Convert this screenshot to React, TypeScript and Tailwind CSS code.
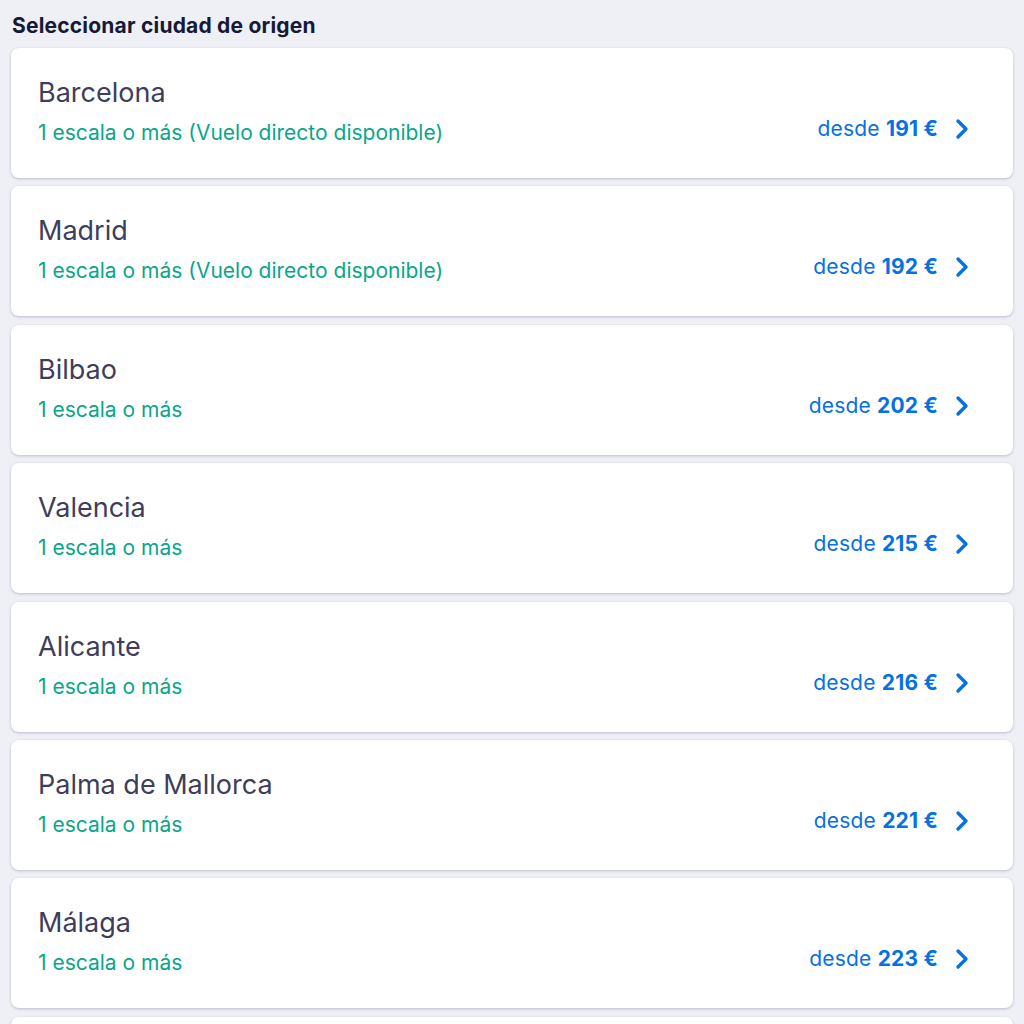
interface Origin {
  city: string;
  stops: string;
  price: number;
}

const origins: Origin[] = [
  { city: 'Barcelona', stops: '1 escala o más (Vuelo directo disponible)', price: 191 },
  { city: 'Madrid', stops: '1 escala o más (Vuelo directo disponible)', price: 192 },
  { city: 'Bilbao', stops: '1 escala o más', price: 202 },
  { city: 'Valencia', stops: '1 escala o más', price: 215 },
  { city: 'Alicante', stops: '1 escala o más', price: 216 },
  { city: 'Palma de Mallorca', stops: '1 escala o más', price: 221 },
  { city: 'Málaga', stops: '1 escala o más', price: 223 },
];

const Chevron = () => (
  <svg width="14" height="22" viewBox="0 0 14 22" fill="none" aria-hidden="true">
    <polyline
      points="3,3 11,11 3,19"
      stroke="currentColor"
      strokeWidth="3.4"
      strokeLinecap="round"
      strokeLinejoin="round"
    />
  </svg>
);

const App = () => {
  return (
    <div
      className="h-[1024px] overflow-hidden bg-[#eff0f6] px-[11px] pt-[12px]"
      style={{ fontFamily: 'Inter, "Noto Sans", sans-serif' }}
    >
      <h1 className="text-[21px] font-bold leading-[28px] text-[#161a36] pl-[1px] tracking-[0.2px]">
        Seleccionar ciudad de origen
      </h1>

      <div className="mt-[8px] flex flex-col gap-[8.4px]">
        {origins.map((o) => (
          <div
            key={o.city}
            className="flex h-[130px] shrink-0 items-start justify-between rounded-[8px] bg-white pl-[27px] pr-[44px] pt-[28px] shadow-[0_1px_3px_rgba(37,32,80,0.25)]"
          >
            <div className="flex flex-col">
              <span className="text-[27px] leading-[34px] text-[#3e3d5c]">{o.city}</span>
              <span className="mt-[9px] text-[21px] leading-[28px] text-[#0aa68a]">{o.stops}</span>
            </div>
            <div className="mt-[39px] flex items-center gap-[17px] text-[#0770e3]">
              <span className="text-[21px] leading-[28px] tracking-[0.2px]">
                desde <span className="font-bold">{o.price} €</span>
              </span>
              <Chevron />
            </div>
          </div>
        ))}
        {/* next card peeking in at the bottom */}
        <div className="h-[130px] shrink-0 rounded-[8px] bg-white shadow-[0_1px_3px_rgba(37,32,80,0.25)]" />
      </div>
    </div>
  );
};

export default App;
